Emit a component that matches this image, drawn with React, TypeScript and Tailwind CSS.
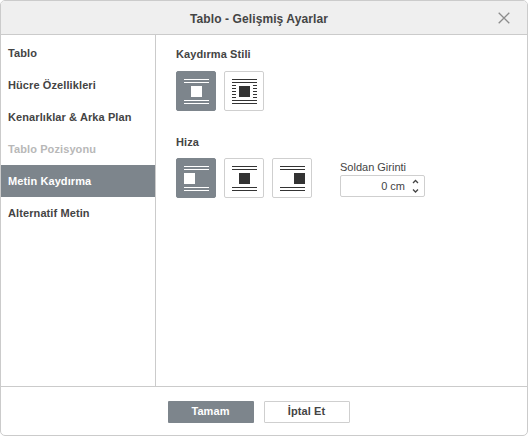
import React from "react";

type Align = "left" | "center" | "right";

const squareX: Record<Align, number> = { left: 8, center: 15, right: 22 };

function WrapIcon({ align, ticks = false }: { align: Align; ticks?: boolean }) {
  return (
    <svg width="40" height="40" viewBox="0 0 40 40" fill="currentColor" shapeRendering="crispEdges" className="block shrink-0">
      {[8, 11, 29, 32].map((y) => (
        <rect key={y} x="8" y={y} width="25" height="1" />
      ))}
      {ticks &&
        [14, 17, 20, 23, 26].map((y) => (
          <g key={y}>
            <rect x="8" y={y} width="4" height="1" />
            <rect x="29" y={y} width="4" height="1" />
          </g>
        ))}
      <rect x={squareX[align]} y="15" width="11" height="11" />
    </svg>
  );
}

function IconButton({ active = false, align, ticks }: { active?: boolean; align: Align; ticks?: boolean }) {
  return (
    <button
      className={`flex size-10 items-center justify-center rounded-[2px] border ${
        active ? "border-[#7d858c] bg-[#7d858c] text-white" : "border-[#cfcfcf] bg-white text-[#333]"
      }`}
    >
      <WrapIcon align={align} ticks={ticks} />
    </button>
  );
}

const items = [
  { label: "Tablo" },
  { label: "Hücre Özellikleri" },
  { label: "Kenarlıklar & Arka Plan" },
  { label: "Tablo Pozisyonu", disabled: true },
  { label: "Metin Kaydırma", active: true },
  { label: "Alternatif Metin" },
];

export default function App() {
  return (
    <div className="flex h-[436px] w-[528px] flex-col overflow-hidden rounded-[5px] border border-[#cbcbcb] bg-white font-['Liberation_Sans',Arial,sans-serif] text-[11px] text-[#444]">
      <header className="relative flex h-[34px] shrink-0 items-center justify-center border-b border-[#cbcbcb] bg-[#efefef] pr-[10px] pt-[2px]">
        <h1 className="text-[12px] leading-4 font-bold tracking-[0.1px]">Tablo - Gelişmiş Ayarlar</h1>
        <button className="absolute top-[11px] right-[17px]" aria-label="Kapat">
          <svg width="12" height="12" viewBox="0 0 12 12" stroke="#8c8c8c" strokeWidth="1.3" className="block">
            <path d="M0.7 0.7L11.3 11.3M11.3 0.7L0.7 11.3" />
          </svg>
        </button>
      </header>
      <div className="flex min-h-0 flex-1">
        <nav className="w-[155px] shrink-0 border-r border-[#cbcbcb] pt-[2px]">
          {items.map((item) => (
            <div
              key={item.label}
              className={`flex h-8 items-center pl-[7px] font-bold tracking-[0.1px] whitespace-nowrap ${
                item.active ? "bg-[#7d858c] text-white" : item.disabled ? "text-[#b8b8b8]" : ""
              }`}
            >
              {item.label}
            </div>
          ))}
        </nav>
        <main className="flex-1 pt-[11px] pl-5">
          <h2 className="h-4 leading-4 font-bold tracking-[0.1px]">Kaydırma Stili</h2>
          <div className="mt-[9px] flex gap-2">
            <IconButton active align="center" />
            <IconButton align="center" ticks />
          </div>
          <h2 className="mt-[23px] h-4 leading-4 font-bold tracking-[0.1px]">Hiza</h2>
          <div className="mt-2 flex">
            <div className="flex gap-2">
              <IconButton active align="left" />
              <IconButton align="center" />
              <IconButton align="right" />
            </div>
            <div className="ml-7">
              <div className="h-[17px] leading-[18px]">Soldan Girinti</div>
              <div className="flex h-[22px] w-[85px] items-center justify-end rounded-[2px] border border-[#cfcfcf] pr-[5px]">
                <span>0 cm</span>
                <svg width="7" height="14" viewBox="0 0 7 14" fill="none" stroke="#444" strokeWidth="1.3" className="ml-[7px] block">
                  <path d="M1 4L3.5 1.5L6 4M1 10.5L3.5 13L6 10.5" />
                </svg>
              </div>
            </div>
          </div>
        </main>
      </div>
      <footer className="flex h-[49px] shrink-0 justify-center gap-[10px] border-t border-[#cbcbcb] pt-[14px] pr-[10px]">
        <button className="h-[22px] w-[86px] rounded-[1px] bg-[#7d858c] pr-px pb-[2px] font-bold tracking-[0.1px] text-white">Tamam</button>
        <button className="h-[22px] w-[86px] rounded-[1px] border border-[#cfcfcf] pr-px pb-[2px] font-bold tracking-[0.1px]">İptal Et</button>
      </footer>
    </div>
  );
}
